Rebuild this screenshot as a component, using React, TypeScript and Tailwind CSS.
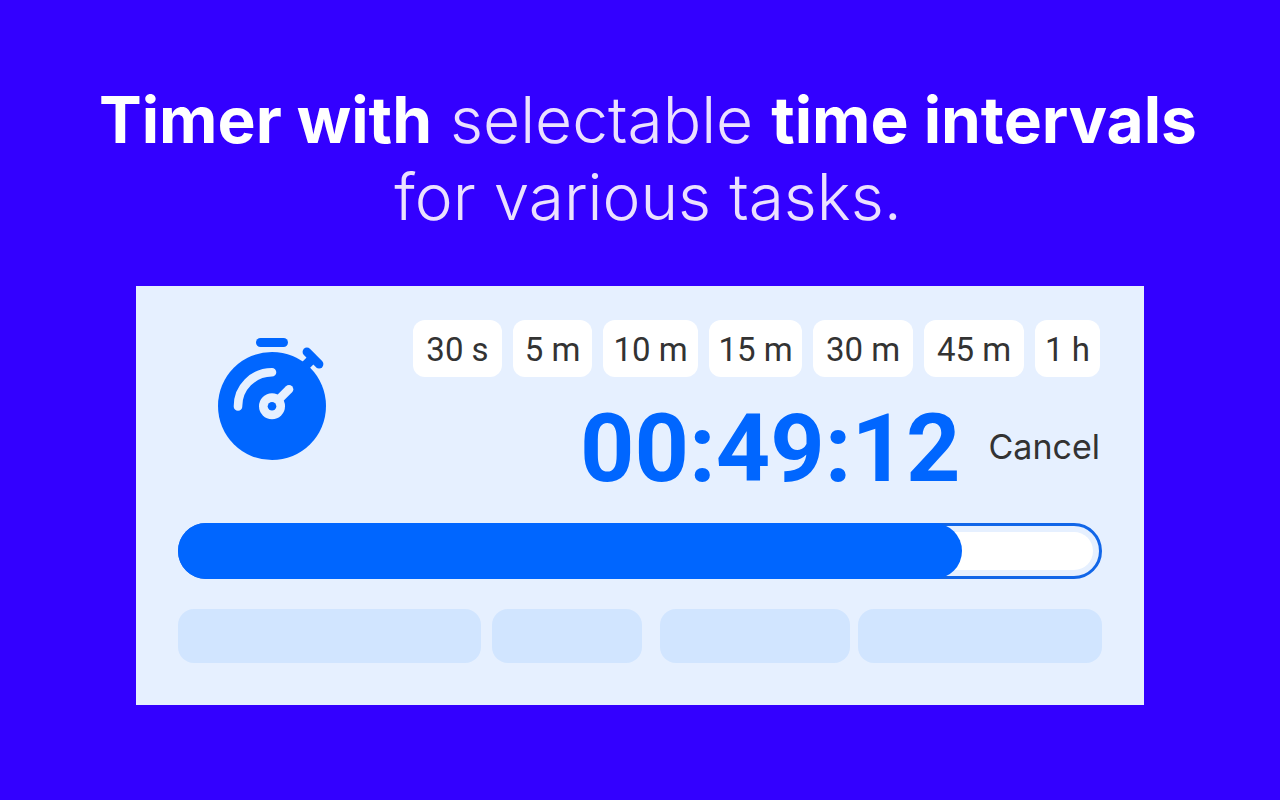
const intervals = [
  { label: "30 s", width: "w-[89px]" },
  { label: "5 m", width: "w-[79px]" },
  { label: "10 m", width: "w-[95px]" },
  { label: "15 m", width: "w-[93px]" },
  { label: "30 m", width: "w-[100px]" },
  { label: "45 m", width: "w-[100px]" },
  { label: "1 h", width: "w-[65px]" },
];

function StopwatchIcon() {
  return (
    <svg viewBox="216 334 112 128" className="h-32 w-28" fill="none" strokeLinecap="round" aria-hidden="true">
      <circle cx="272" cy="406" r="54" fill="#0066ff" />
      <path d="M260.5 342.5H283.5" stroke="#0066ff" strokeWidth="9" />
      <path d="M306.9 351.9L319.1 364.1" stroke="#0066ff" strokeWidth="8.6" />
      <path d="M313 358L304 367" stroke="#0066ff" strokeWidth="9.6" strokeLinecap="butt" />
      <path d="M238 406.5A34 34 0 0 1 272 372.3" stroke="#e6f0ff" strokeWidth="8.6" />
      <path d="M272 406.3L289 389.3" stroke="#e6f0ff" strokeWidth="8.6" />
      <circle cx="272" cy="406.3" r="13" fill="#e6f0ff" />
      <circle cx="272" cy="406.3" r="4.3" fill="#0066ff" />
    </svg>
  );
}

function Progress({ value }: { value: number }) {
  return (
    <div
      role="progressbar"
      aria-label="Elapsed time"
      aria-valuenow={value}
      aria-valuemin={0}
      aria-valuemax={100}
      className="relative h-14 rounded-full border-[3px] border-[#1166e8] p-1.5"
    >
      <div className="h-full rounded-full bg-white" />
      <div className="absolute -inset-[3px]">
        <div className="h-full rounded-full bg-[#0066ff]" style={{ width: `${value}%` }} />
      </div>
    </div>
  );
}

export default function App() {
  return (
    <main className="min-h-screen bg-[#3300ff] px-4 pt-[81px] pb-24 font-['Inter',sans-serif]">
      <h1 className="pl-4 text-center text-[64px] leading-[77px] font-[350] text-[#ebe0ff]">
        <strong className="font-bold text-white">Timer with</strong> selectable{" "}
        <strong className="font-bold text-white">time intervals</strong>
        <br />
        for various tasks.
      </h1>

      <section className="mx-auto mt-[51px] max-w-[1008px] bg-[#e6f0ff] px-[42px] pt-[34px] pb-[42px]">
        <div className="flex justify-between pr-0.5">
          <div className="pt-3.5 pl-[38px]">
            <StopwatchIcon />
          </div>
          <div className="flex flex-col items-end">
            <div className="flex gap-[11px]">
              {intervals.map((item) => (
                <button
                  key={item.label}
                  type="button"
                  className={`${item.width} h-[57px] rounded-xl bg-white pt-0.5 text-center font-['Roboto',sans-serif] text-[33px] whitespace-nowrap text-[#333333]`}
                >
                  {item.label}
                </button>
              ))}
            </div>
            <div className="mt-6 flex items-center gap-7">
              <time className="font-['Roboto',sans-serif] text-[95px] leading-[96px] font-bold text-[#0066ff]">
                00:49:12
              </time>
              <button type="button" className="pb-1 text-[34px] leading-10 text-[#333333]">
                Cancel
              </button>
            </div>
          </div>
        </div>

        <div className="mt-[26px]">
          <Progress value={84.8} />
        </div>

        <div className="mt-[30px] flex h-[54px]">
          <div className="mr-[11px] grow-[303] rounded-2xl bg-[#d1e5ff]" />
          <div className="mr-[18px] grow-[149] rounded-2xl bg-[#d1e5ff]" />
          <div className="mr-2 grow-[190] rounded-2xl bg-[#d1e5ff]" />
          <div className="grow-[244] rounded-2xl bg-[#d1e5ff]" />
        </div>
      </section>
    </main>
  );
}
